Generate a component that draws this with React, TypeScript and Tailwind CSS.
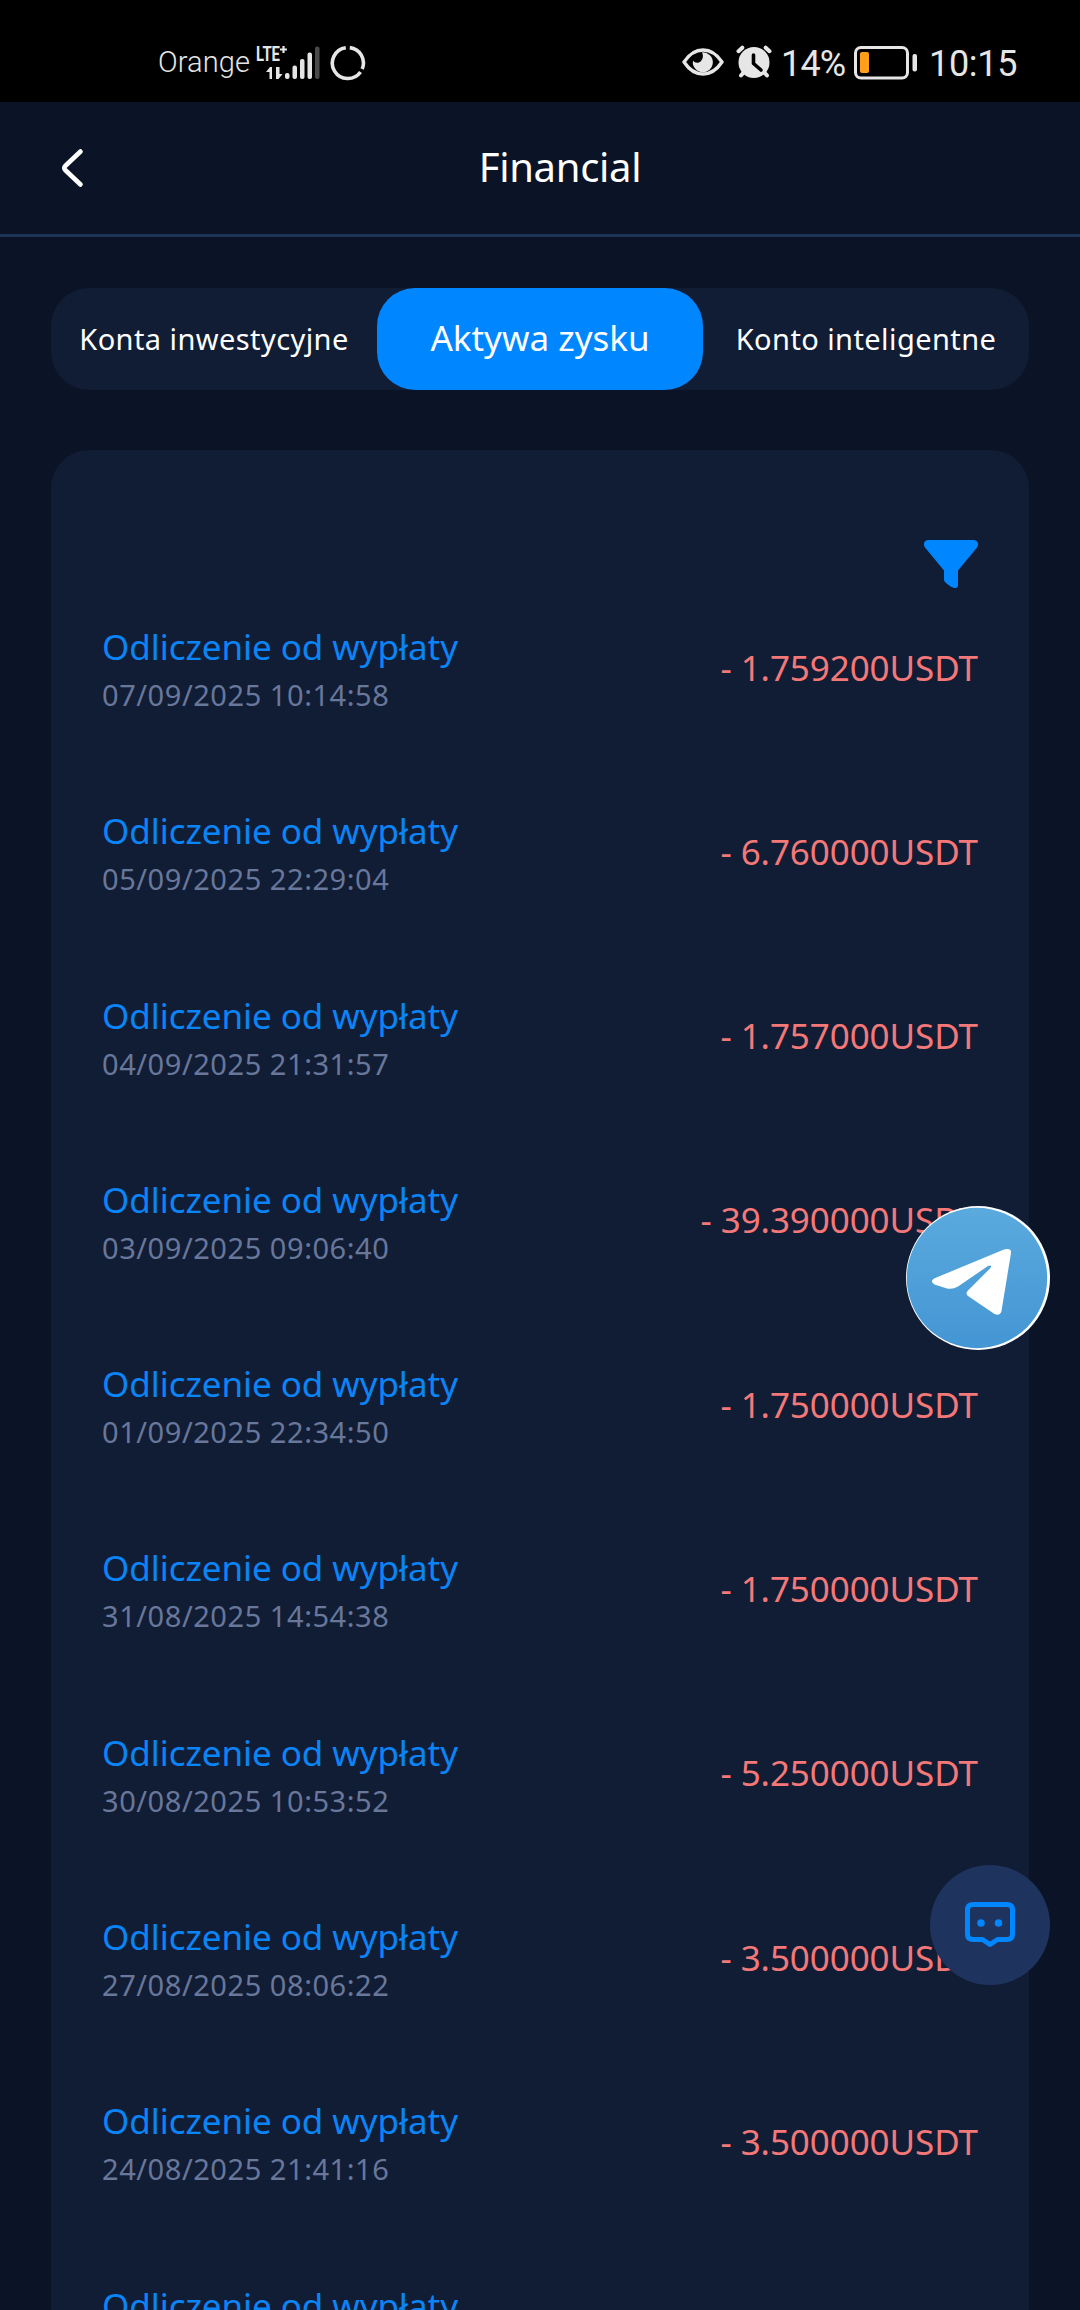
import React, { useState } from 'react';

interface Transaction {
  date?: string;
  amount?: string;
}

const tabs = ['Konta inwestycyjne', 'Aktywa zysku', 'Konto inteligentne'];

const transactions: Transaction[] = [
  { date: '07/09/2025 10:14:58', amount: '1.759200' },
  { date: '05/09/2025 22:29:04', amount: '6.760000' },
  { date: '04/09/2025 21:31:57', amount: '1.757000' },
  { date: '03/09/2025 09:06:40', amount: '39.390000' },
  { date: '01/09/2025 22:34:50', amount: '1.750000' },
  { date: '31/08/2025 14:54:38', amount: '1.750000' },
  { date: '30/08/2025 10:53:52', amount: '5.250000' },
  { date: '27/08/2025 08:06:22', amount: '3.500000' },
  { date: '24/08/2025 21:41:16', amount: '3.500000' },
  {},
];

const SignalIcon = () => (
  <svg width="66" height="52" viewBox="0 -8 66 52" className="shrink-0">
    <text
      x="0"
      y="16"
      fill="#e6e6e6"
      fontSize="20"
      fontWeight="700"
      textLength="24"
      lengthAdjust="spacingAndGlyphs"
      fontFamily="Roboto, sans-serif"
    >
      LTE
    </text>
    <path d="M24 4.5h7M27.5 1v7" stroke="#e6e6e6" strokeWidth="2.2" />
    <path d="M16 34V22h-2l-4 5h3.500V34zM20 22v12h2.500l4-5h-3V22z" fill="#e6e6e6" />
    <rect x="29" y="28" width="4.500" height="6" rx="2" fill="#e6e6e6" />
    <rect x="36.500" y="20.500" width="4.500" height="13.500" rx="2" fill="#e6e6e6" />
    <rect x="44" y="14" width="4.500" height="20" rx="2" fill="#e6e6e6" />
    <rect x="51.500" y="7.500" width="4.500" height="26.500" rx="2" fill="#e6e6e6" />
    <rect x="59" y="1.500" width="4.500" height="32.500" rx="2" fill="#4a4a4a" />
  </svg>
);

const RingIcon = () => (
  <svg width="36" height="36" viewBox="0 0 36 36" className="shrink-0">
    <g fill="none" stroke="#e6e6e6" strokeWidth="3.6">
      <path d="M19.800 2.600A15.500 15.500 0 0 1 32.200 24" />
      <path d="M30.500 27A15.500 15.500 0 1 1 15.800 2.700" />
    </g>
  </svg>
);

const EyeIcon = () => (
  <svg width="42" height="28" viewBox="0 0 42 28" className="shrink-0">
    <path
      d="M2 14C7 6.500 13.500 2 21 2s14 4.500 19 12c-5 7.500-11.500 12-19 12S7 21.500 2 14z"
      fill="none"
      stroke="#e6e6e6"
      strokeWidth="3.4"
      strokeLinejoin="round"
    />
    <path d="M20 4.300a10 10 0 1 1-9 8.200c1.500 2.500 5.500 3.200 7.800.8 2.400-2.400 2.700-6 1.200-9z" fill="#e6e6e6" />
  </svg>
);

const AlarmIcon = () => (
  <svg width="36" height="34" viewBox="0 0 36 34" className="shrink-0">
    <g stroke="#e6e6e6" strokeWidth="4" strokeLinecap="round">
      <path d="M2.500 6.200L6.300 2.700M33.500 6.200L29.700 2.700M8 27l-3 3.500M28 27l3 3.500" />
    </g>
    <circle cx="18" cy="17.500" r="15.500" fill="#e6e6e6" />
    <path
      d="M17.500 10v8.500l7.500 6.500"
      fill="none"
      stroke="#000000"
      strokeWidth="3.6"
      strokeLinecap="round"
      strokeLinejoin="round"
    />
  </svg>
);

const BatteryIcon = () => (
  <svg width="64" height="34" viewBox="0 0 64 34" className="shrink-0">
    <rect x="1.500" y="1.500" width="52" height="30.500" rx="5.500" fill="none" stroke="#e6e6e6" strokeWidth="3" />
    <rect x="6" y="6" width="9" height="21" rx="2" fill="#ff9f1a" />
    <rect x="58.500" y="8" width="4.500" height="17.500" rx="2" fill="#e6e6e6" />
  </svg>
);

const StatusBar = () => (
  <div className="flex h-[102px] items-center bg-black pl-[158px] pr-[63px] pt-[23px] font-[Roboto,sans-serif] text-[#e6e6e6]">
    <span className="w-[98px] whitespace-nowrap text-[29px] font-light leading-none tracking-[0.1px]">Orange</span>
    <div className="flex items-center gap-[8px]">
      <SignalIcon />
      <RingIcon />
    </div>
    <div className="ml-auto flex items-center">
      <div className="flex items-center gap-[12px] pb-[2px]">
        <EyeIcon />
        <AlarmIcon />
      </div>
      <span className="ml-[9px] w-[73px] whitespace-nowrap pt-[2px] text-[36px] leading-none tracking-[-0.8px]">14%</span>
      <BatteryIcon />
      <span className="ml-[11px] w-[88px] whitespace-nowrap pt-[2px] text-[36px] leading-none tracking-[-0.3px]">10:15</span>
    </div>
  </div>
);

const Header = () => (
  <header className="grid h-[135px] grid-cols-3 items-center border-b-[3px] border-[#1e3358] px-[60px]">
    <button className="justify-self-start">
      <svg width="24" height="40" viewBox="0 0 24 40">
        <path
          d="M20.500 3.500L5.200 18Q3.500 20 5.200 22L20.500 36.500"
          fill="none"
          stroke="#ffffff"
          strokeWidth="4.6"
          strokeLinecap="round"
          strokeLinejoin="round"
        />
      </svg>
    </button>
    <h1 className="pb-[2px] pl-[40px] text-center text-[40px] leading-none tracking-[-0.3px]">Financial</h1>
  </header>
);

const TransactionRow: React.FC<Transaction> = ({ date, amount }) => (
  <li className="flex h-[94px] items-center justify-between">
    <div className="flex h-full flex-col whitespace-nowrap">
      <span className="h-[50px] text-[35px] leading-[50px] tracking-[-0.06px] text-[#0a85f8]">Odliczenie od wypłaty</span>
      <span className="text-[29px] leading-[45px] tracking-[0.55px] text-[#68779a]">{date}</span>
    </div>
    {amount && (
      <span className="whitespace-nowrap pb-[3px] text-[35px] leading-[50px] tracking-[-0.08px] text-[#f47878]">
        - {amount}USDT
      </span>
    )}
  </li>
);

export default function App() {
  const [activeTab, setActiveTab] = useState(1);

  return (
    <div className="relative h-[2310px] w-[1080px] overflow-hidden bg-[#0b1426] font-['Noto_Sans',sans-serif] text-white">
      <StatusBar />
      <Header />

      <main className="px-[51px] pt-[51px]">
        <div className="grid h-[102px] grid-cols-3 rounded-[38px] bg-[#111d34]">
          {tabs.map((tab, index) => (
            <button
              key={tab}
              onClick={() => setActiveTab(index)}
              className={
                index === activeTab
                  ? 'whitespace-nowrap rounded-[38px] bg-[#0086ff] pb-[2px] text-[35px]'
                  : 'whitespace-nowrap text-[29px] tracking-[0.42px]'
              }
            >
              {tab}
            </button>
          ))}
        </div>

        <section className="mt-[60px] rounded-t-[38px] bg-[#111d34] px-[51px] pt-[90px]">
          <div className="flex justify-end">
            <button>
              <svg width="54" height="48" viewBox="0 0 54 48" className="block">
                <path
                  d="M4.500 0h45c4 0 6 4 3.500 7.500L34 30.500V45c0 2.500-2 3.500-4.500 2.800-3.500-1.300-6-3.500-8.500-5.800-.7-.8-1-1.500-1-2.500v-9L1 7.500C-1.500 4 .5 0 4.500 0z"
                  fill="#0086ff"
                />
              </svg>
            </button>
          </div>
          <ul className="mt-[34px] flex flex-col gap-[90.3px]">
            {transactions.map((transaction, index) => (
              <TransactionRow key={index} {...transaction} />
            ))}
          </ul>
        </section>
      </main>

      {/* Floating contact buttons */}
      <button className="absolute left-[906px] top-[1206px]">
        <svg width="144" height="144" viewBox="0 0 144 144" className="block">
          <defs>
            <linearGradient id="telegram" x1="0" y1="0" x2="0" y2="1">
              <stop offset="0" stopColor="#5aaade" />
              <stop offset="1" stopColor="#4496d4" />
            </linearGradient>
          </defs>
          <circle cx="72" cy="72" r="72" fill="#ffffff" />
          <circle cx="71" cy="72" r="70.200" fill="url(#telegram)" />
          <path
            d="M28 72.500L98 43.500Q105.500 41.500 105 47L95.500 105Q94 110.500 88.500 108L62 90Q59 87.500 62 84.500L84.500 62Q86.500 58.500 82 60L52 80.500Q47 83.500 41 82.500L28.500 78.500Q23.500 75.500 28 72.500z"
            fill="#ffffff"
          />
        </svg>
      </button>
      <button className="absolute left-[930px] top-[1865px] flex h-[120px] w-[120px] items-center justify-center rounded-full bg-[#1f335f]">
        <svg width="50" height="46" viewBox="0 0 50 46">
          <path
            d="M8 2.500h34q5.500 0 5.500 5.500v24q0 5.500-5.500 5.500h-9.500L25 42.500l-7.500-5H8q-5.500 0-5.500-5.500V8q0-5.500 5.500-5.500z"
            fill="none"
            stroke="#0086ff"
            strokeWidth="5"
            strokeLinejoin="round"
          />
          <circle cx="16" cy="21" r="3.800" fill="#0086ff" />
          <circle cx="33.500" cy="21" r="3.800" fill="#0086ff" />
        </svg>
      </button>
    </div>
  );
}
